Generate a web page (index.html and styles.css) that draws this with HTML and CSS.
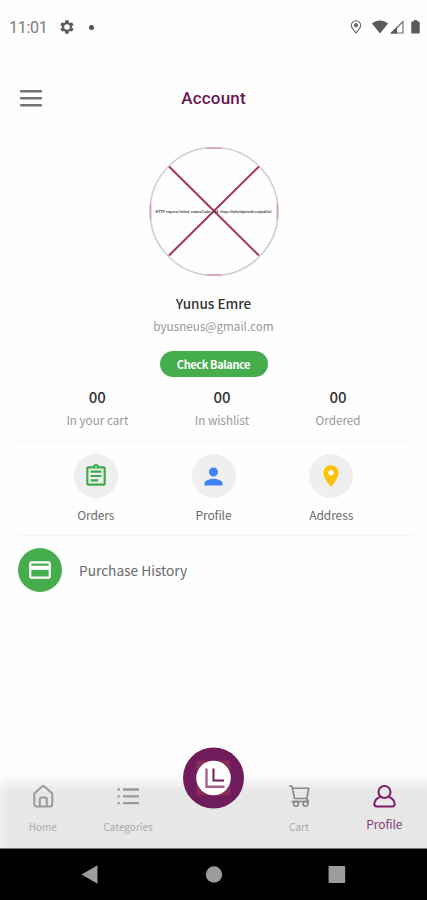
FILE: index.html
```html
<!DOCTYPE html>
<html lang="en">
<head>
    <meta charset="UTF-8">
    <meta name="viewport" content="width=device-width, initial-scale=1.0">
    <title>Account</title>
    <link rel="stylesheet" href="styles.css">
</head>
<body>
    <div class="status-bar">
        <span class="time">11:01</span>
        <svg class="gear" width="16" height="16" viewBox="0 0 24 24"><path fill="#5c5c5c" fill-rule="evenodd" d="M19.4 13a7.500 7.500 0 0 0 0-2l2.100-1.600a.5.5 0 0 0 .1-.6l-2-3.500a.5.5 0 0 0-.6-.2l-2.500 1a7 7 0 0 0-1.700-1l-.4-2.700a.5.5 0 0 0-.5-.4h-4a.5.5 0 0 0-.5.4L9 5.100a7 7 0 0 0-1.700 1l-2.500-1a.5.5 0 0 0-.6.2l-2 3.500a.5.5 0 0 0 .1.600L4.500 11a7.500 7.500 0 0 0 0 2l-2.200 1.600a.5.5 0 0 0-.1.600l2 3.500c.1.200.4.300.6.200l2.500-1a7 7 0 0 0 1.700 1l.4 2.700c0 .2.200.4.500.4h4c.3 0 .5-.2.500-.4l.4-2.700a7 7 0 0 0 1.700-1l2.500 1c.2.100.5 0 .6-.2l2-3.500a.5.5 0 0 0-.1-.6zM12 16.200a4.200 4.200 0 1 1 0-8.400 4.200 4.200 0 0 1 0 8.400z"/></svg>
        <span class="dot"></span>
        <div class="status-icons">
            <svg class="pin" width="12" height="14" viewBox="0 0 12 14" fill="none" stroke="#666"><path d="M6 13C3.500 10 1.300 7.600 1.300 5.400a4.700 4.700 0 0 1 9.400 0C10.700 7.600 8.500 10 6 13z" stroke-width="1.100"/><circle cx="6" cy="5.300" r="1.700" fill="#777"/></svg>
            <svg class="wifi" width="16" height="14" viewBox="0 0 16 14"><path fill="#5a5a5a" d="M0 3.400C4.700-.5 11.300-.5 16 3.400L8 13.600z"/></svg>
            <svg class="signal" width="14" height="14" viewBox="0 0 14 14"><path fill="none" stroke="#666" stroke-width="1.100" d="M1.400 13L13 1.500V13z"/><path fill="#5a5a5a" d="M.5 13.500L7 7v6.500z"/></svg>
            <svg width="9" height="14" viewBox="0 0 9 14"><path fill="#5a5a5a" d="M2.800 0h3.400v1.500h1.600q.9 0 .9.900v10.200q0 .9-.9.900H1.200q-.9 0-.9-.9V2.400q0-.9.9-.9h1.600z"/></svg>
        </div>
    </div>

    <header class="header">
        <svg width="22" height="18" viewBox="0 0 22 18"><path d="M1 2.200h20M1 9.200h20M1 16.200h20" stroke="#707070" stroke-width="2.400" stroke-linecap="round"/></svg>
        <h1>Account</h1>
    </header>

    <section class="user">
        <div class="avatar">
            <svg class="avatar-cross" width="130" height="130" viewBox="0 0 130 130" fill="none">
                <circle cx="65" cy="64.500" r="64" stroke="#d2d0d2" stroke-width="1.700"/>
                <path d="M57 1.300h16M57 127.700h16M1.600 56.500v16M128.400 56.500v16" stroke="#d9a3b0" stroke-width="1.600"/>
                <path d="M20 19.500l90 89M110 19.500l-90 89" stroke="#a5355a" stroke-width="2"/>
            </svg>
            <span class="avatar-error">HTTP request failed, statusCode: 404, https://tahvidpetsah.co/public/</span>
        </div>
        <div class="name">Yunus Emre</div>
        <div class="email">byusneus@gmail.com</div>
        <button class="balance">Check Balance</button>
    </section>

    <section class="stats">
        <div class="stat"><b>00</b><span>In your cart</span></div>
        <div class="stat"><b>00</b><span>In wishlist</span></div>
        <div class="stat"><b>00</b><span>Ordered</span></div>
    </section>

    <section class="actions">
        <div class="action">
            <div class="round">
                <svg width="26" height="26" viewBox="0 0 24 24" fill="#3fab48"><path d="M7 15h7v2H7zm0-4h10v2H7zm0-4h10v2H7zm12-4h-4.180C14.400 1.840 13.300 1 12 1s-2.400.84-2.820 2H5c-1.100 0-2 .9-2 2v14c0 1.100.9 2 2 2h14c1.100 0 2-.9 2-2V5c0-1.100-.9-2-2-2zm-7-.25a.75.75 0 1 1 0 1.500.75.75 0 0 1 0-1.500zM19 19H5V5h14z"/></svg>
            </div>
            <span>Orders</span>
        </div>
        <div class="action">
            <div class="round">
                <svg width="27" height="27" viewBox="0 0 24 24" fill="#3d83f5"><path d="M12 12c2.210 0 4-1.790 4-4s-1.790-4-4-4-4 1.790-4 4 1.790 4 4 4zm0 2c-2.670 0-8 1.340-8 4v2h16v-2c0-2.660-5.330-4-8-4z"/></svg>
            </div>
            <span>Profile</span>
        </div>
        <div class="action">
            <div class="round">
                <svg width="26" height="26" viewBox="0 0 24 24" fill="#fec109"><path d="M12 2C8.130 2 5 5.130 5 9c0 5.250 7 13 7 13s7-7.750 7-13c0-3.870-3.130-7-7-7z"/><circle cx="12" cy="9" r="2.500" fill="#fff"/></svg>
            </div>
            <span>Address</span>
        </div>
    </section>

    <section class="history">
        <div class="history-icon">
            <svg width="26" height="26" viewBox="0 0 24 24" fill="#fff"><path d="M20 4H4c-1.110 0-1.990.89-1.990 2L2 18c0 1.110.89 2 2 2h16c1.110 0 2-.89 2-2V6c0-1.110-.89-2-2-2zm0 14H4v-6h16zm0-10H4V6h16z"/></svg>
        </div>
        <span>Purchase History</span>
    </section>

    <nav class="tabs">
        <div class="tab">
            <svg width="24" height="24" viewBox="0 0 24 24" fill="none" stroke="#999" stroke-width="2" stroke-linejoin="round"><path d="M3.300 9.500L10.800 2.800q1.500-1.300 3 0L21.300 9.500v10.500q0 2.500-2.500 2.500h-13q-2.500 0-2.500-2.500z"/><path d="M8.800 22.500v-7q0-2 2-2h3q2 0 2 2v7"/></svg>
            <span>Home</span>
        </div>
        <div class="tab">
            <svg width="24" height="24" viewBox="0 0 24 24" fill="none" stroke="#999" stroke-width="2.300"><path d="M7 5.500h16M7 12.300h16M7 19.100h16M1.500 5.500h2.300M1.500 12.300h2.300M1.500 19.100h2.300"/></svg>
            <span>Categories</span>
        </div>
        <div class="tab center">
            <div class="logo">
                <svg width="62" height="62" viewBox="0 0 62 62" fill="none"><circle cx="31.500" cy="31" r="30.500" fill="#6f1c5c"/><path fill="#8a2d59" d="M14.500 13.500h34v35h-34z"/><circle cx="31.500" cy="31" r="17.300" fill="#fff"/><path d="M24.500 21.500v18.300h18" stroke="#a5608c" stroke-width="2.400"/><path d="M31.500 21.500v12h10.500" stroke="#6f1c5c" stroke-width="2"/></svg>
            </div>
        </div>
        <div class="tab">
            <svg width="24" height="24" viewBox="0 0 24 24" fill="none" stroke="#888" stroke-width="1.600" stroke-linejoin="round"><path d="M2 2h2.800l2.800 12.500h12M5.300 4.200h16.500l-2 10.300 1.800 3H4.500"/><circle cx="9" cy="19.800" r="2.400"/><circle cx="18.500" cy="19.800" r="2.400"/></svg>
            <span>Cart</span>
        </div>
        <div class="tab active">
            <svg width="24" height="24" viewBox="0 0 24 24" fill="none" stroke="#7c1b69" stroke-width="2" stroke-linejoin="round"><circle cx="12.500" cy="8" r="6"/><path d="M8.500 12.600c-3.200 1.200-6 4.200-6.200 7.500q0 2.400 2.400 2.400h15.600q2.400 0 2.400-2.400c-.2-3.300-3-6.300-6.200-7.500"/></svg>
            <span>Profile</span>
        </div>
    </nav>

    <div class="system-bar">
        <svg width="18" height="20" viewBox="0 0 18 20"><path fill="#9c9c9c" d="M.5 9.500L16.500 .3v18.400z"/></svg>
        <svg width="18" height="20" viewBox="0 0 18 20"><circle cx="9" cy="9.500" r="8.200" fill="#9c9c9c"/></svg>
        <svg width="18" height="20" viewBox="0 0 18 20"><rect x=".6" y="1.100" width="16.600" height="17" rx="1.200" fill="#9c9c9c"/></svg>
    </div>
</body>
</html>
```
FILE: styles.css
```css
* {
    box-sizing: border-box;
}
body {
    display: flex;
    flex-direction: column;
    height: 900px;
    margin: 0;
    overflow: hidden;
    background-color: #fefefe;
    font-family: "Noto Sans CJK SC", "Noto Sans", sans-serif;
}
svg {
    display: block;
}
.status-bar {
    display: flex;
    align-items: center;
    height: 54px;
    padding: 0 7px 0 9px;
}
.time {
    width: 50px;
    padding-top: 2px;
    font: 16px/20px Roboto, sans-serif;
    letter-spacing: -0.3px;
    color: #7c7c7c;
}
.dot {
    width: 5px;
    height: 5px;
    margin-left: 14px;
    border-radius: 50%;
    background-color: #555;
}
.status-icons {
    display: flex;
    margin-left: auto;
}
.pin {
    margin-right: 10px;
}
.wifi {
    margin-right: 2px;
}
.signal {
    margin-right: 7px;
}
.header {
    display: grid;
    grid-template-columns: 60px 1fr 60px;
    align-items: center;
    height: 88px;
    padding: 0 20px;
}
.header h1 {
    margin: 0;
    font: 500 17px/24px Roboto, sans-serif;
    letter-spacing: 0.2px;
    text-align: center;
    color: #68164f;
}
.user {
    display: flex;
    flex-direction: column;
    align-items: center;
    padding-top: 5px;
}
.avatar {
    display: grid;
    place-items: center;
    width: 130px;
    height: 130px;
}
.avatar-cross,
.avatar-error {
    grid-area: 1 / 1;
}
.avatar-error {
    font: bold 3.550px/4px "Liberation Sans", sans-serif;
    white-space: nowrap;
    color: #444;
}
.name {
    margin-top: 16px;
    font-size: 13.500px;
    font-weight: 500;
    line-height: 20px;
    color: #333;
}
.email {
    margin-top: 4px;
    font-size: 11.700px;
    line-height: 18px;
    color: #999;
}
/* green pill under the e-mail */
.balance {
    width: 108px;
    height: 26px;
    margin-top: 16px;
    padding: 0;
    border: 0;
    border-radius: 13px;
    background-color: #46ad4d;
    font: 700 11px/24px "Noto Sans CJK SC", sans-serif;
    letter-spacing: -0.4px;
    color: #fff;
}
.stats {
    display: flex;
    justify-content: space-evenly;
    height: 64px;
    padding-top: 9px;
}
.stat {
    display: flex;
    flex-direction: column;
    align-items: center;
}
.stat b {
    font-size: 15px;
    font-weight: 500;
    line-height: 22px;
    color: #333;
}
.stat span {
    margin-top: 1px;
    font-size: 11.700px;
    line-height: 22px;
    color: #999;
}
.actions {
    display: flex;
    justify-content: space-evenly;
    height: 94px;
    padding-top: 13px;
    background: linear-gradient(#f5f5f5, #f5f5f5) 15px 0 / 395px 1px no-repeat;
}
.action {
    display: flex;
    flex-direction: column;
    align-items: center;
    width: 44px;
}
.round {
    display: grid;
    place-items: center;
    width: 44px;
    height: 44px;
    border-radius: 50%;
    background-color: #efefef;
}
.action span {
    margin-top: 7px;
    font-size: 12px;
    line-height: 20px;
    letter-spacing: -0.1px;
    white-space: nowrap;
    color: #6a6a6a;
}
.history {
    display: flex;
    align-items: center;
    gap: 17px;
    margin: 0 14px 0 18px;
    padding: 12px 0;
    border-top: 1px solid #f5f5f5;
    font-size: 13.700px;
    line-height: 22px;
    color: #6a6a6a;
}
.history-icon {
    display: grid;
    place-items: center;
    width: 44px;
    height: 44px;
    border-radius: 50%;
    background-color: #46ad4d;
}
.tabs {
    display: grid;
    grid-template-columns: repeat(5, 1fr);
    height: 74px;
    margin-top: auto;
    background:
        linear-gradient(90deg, rgba(254, 254, 254, 0.4), rgba(254, 254, 254, 0) 8px),
        linear-gradient(#fefefe, #f2f2f2 9px, #e7e7e7 18px);
}
.tab {
    display: flex;
    flex-direction: column;
    align-items: center;
    padding-top: 10px;
}
.tab span {
    margin-top: 10px;
    font-size: 10px;
    line-height: 18px;
    color: #aaa;
}
.tab.active span {
    margin-top: 7px;
    font-size: 12px;
    letter-spacing: -0.1px;
    color: #853d76;
}
/* the logo sticks out above the bar */
.center {
    padding-top: 0;
}
.logo {
    margin-top: -27px;
}
.system-bar {
    display: flex;
    justify-content: space-between;
    align-items: center;
    height: 52px;
    padding: 0 81px;
    border-top: 1px solid #777;
    background-color: #000;
}
```
